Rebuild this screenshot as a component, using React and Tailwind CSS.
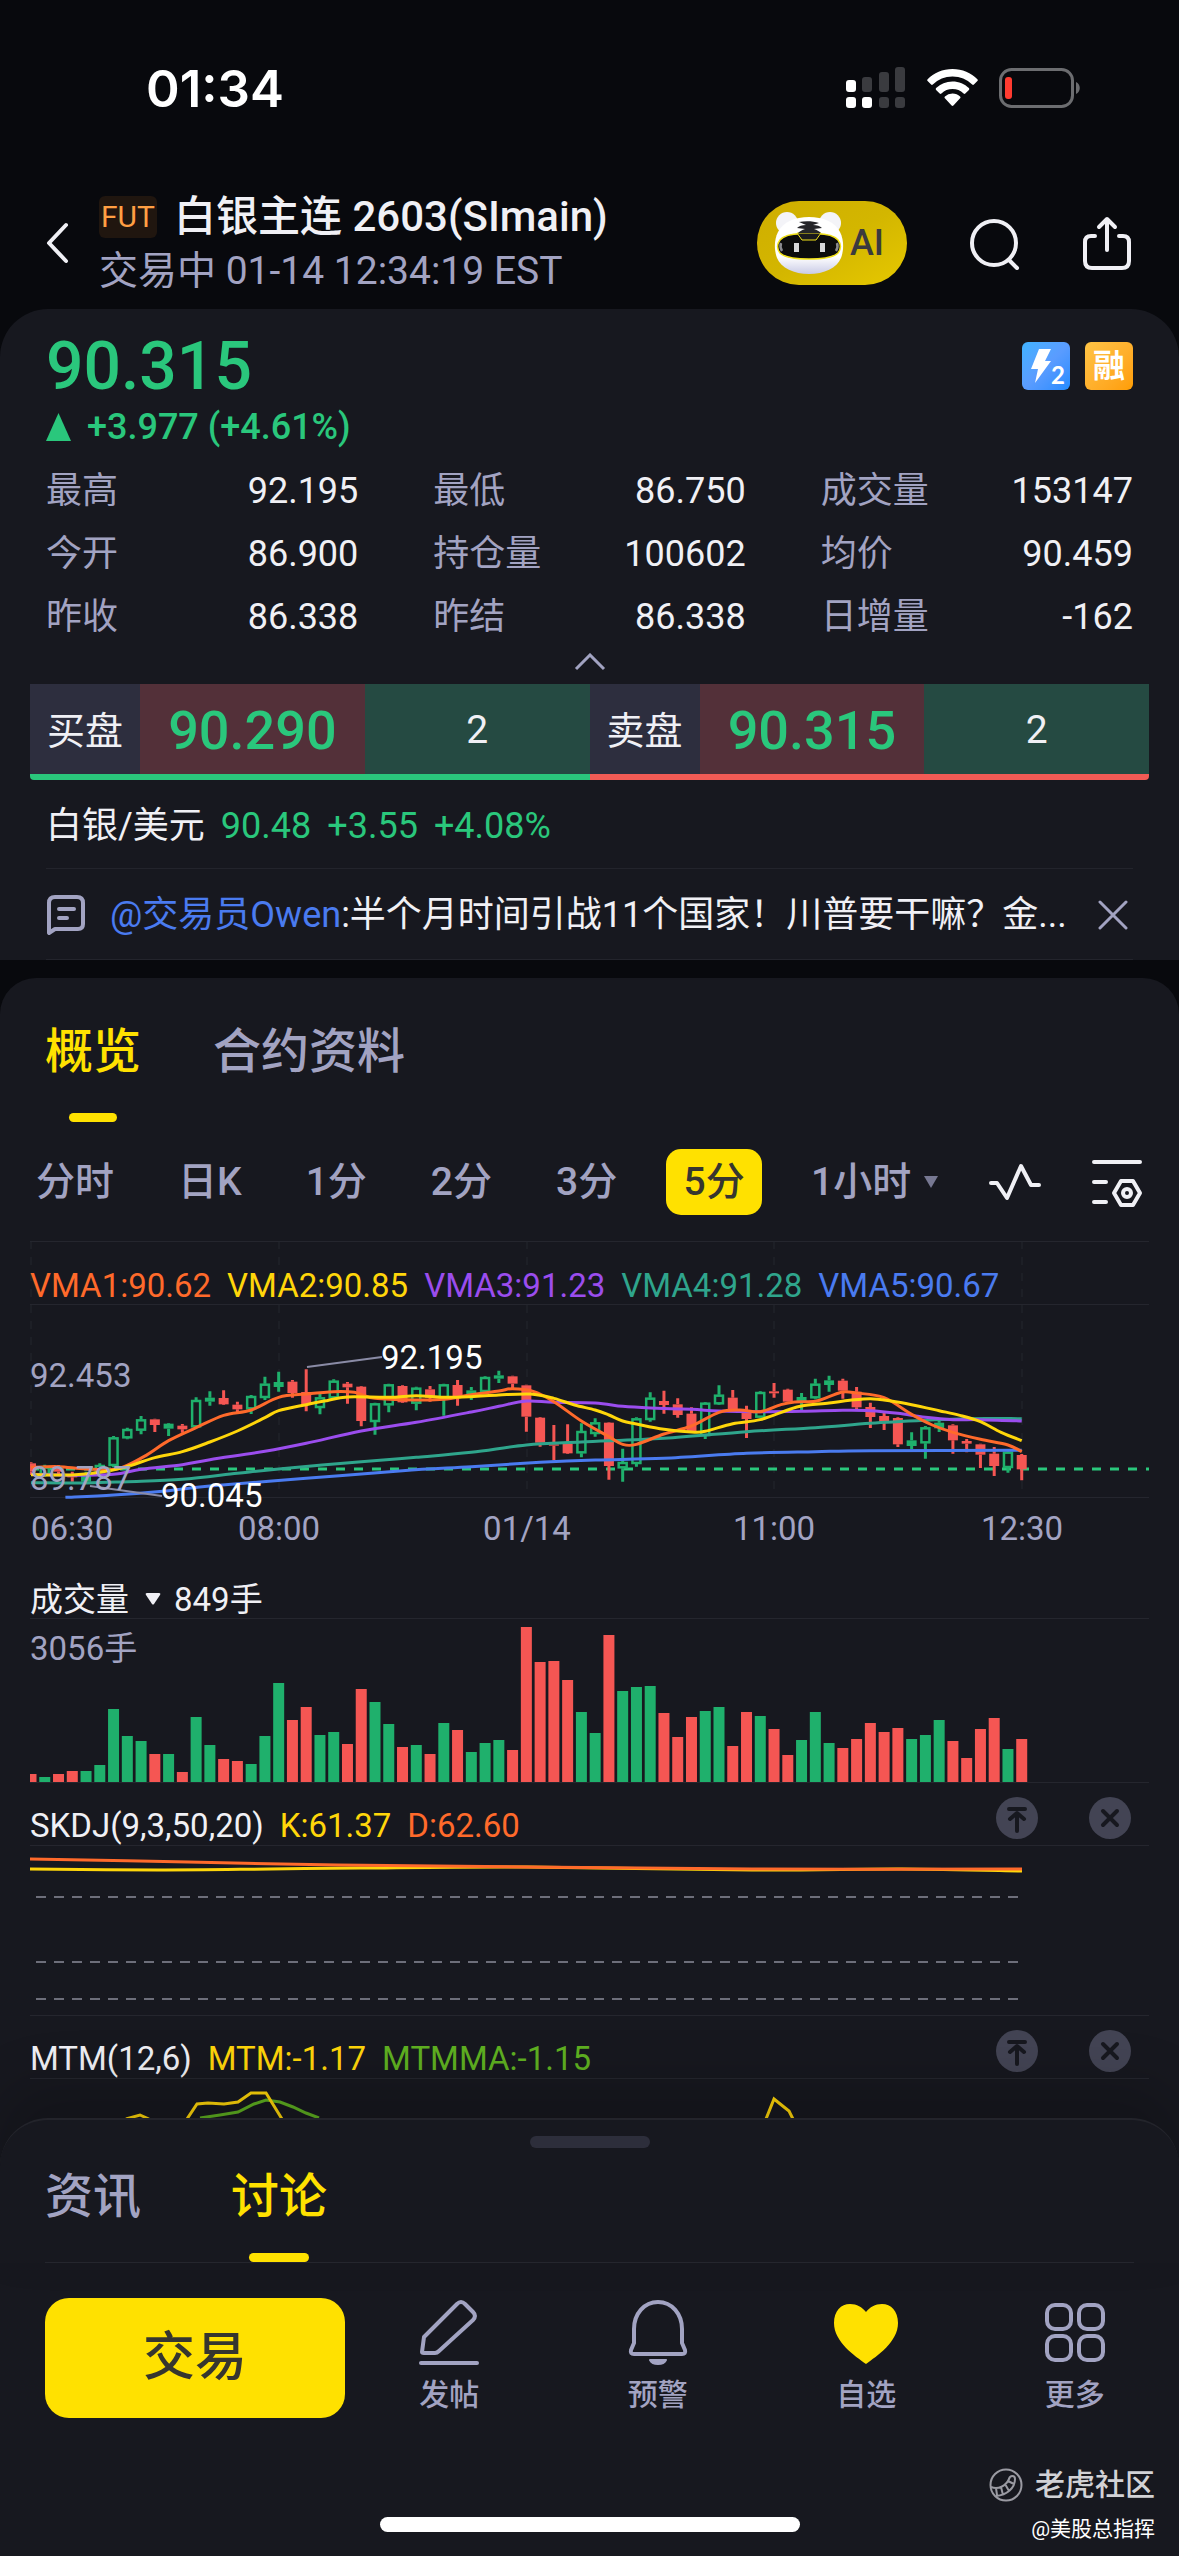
import React from "react";

const STEP = 13.76;

// [up, high, bodyTop, bodyBottom, low] in thirds of a pixel
const CANDLES = [
  [0, 697, 700, 725, 735], [1, 704, 710, 735, 740], [0, 705, 710, 725, 735], [0, 725, 735, 742, 755],
  [1, 725, 738, 755, 762], [1, 700, 705, 725, 730], [1, 618, 622, 708, 712], [1, 593, 597, 625, 628],
  [1, 558, 568, 602, 613], [0, 566, 568, 585, 606], [1, 579, 581, 596, 618], [0, 582, 587, 598, 608],
  [1, 502, 510, 592, 594], [1, 484, 503, 515, 527], [0, 481, 504, 523, 525], [0, 515, 524, 538, 548],
  [1, 495, 498, 538, 552], [1, 440, 461, 504, 510], [1, 425, 456, 471, 485], [0, 450, 455, 489, 503],
  [0, 418, 486, 525, 544], [1, 487, 502, 534, 553], [1, 448, 452, 505, 508], [0, 456, 461, 472, 521],
  [0, 468, 470, 573, 589], [1, 518, 520, 576, 614], [1, 461, 463, 526, 547], [0, 466, 468, 517, 519],
  [1, 470, 473, 521, 541], [0, 468, 478, 503, 515], [1, 461, 463, 506, 557], [0, 450, 465, 500, 527],
  [1, 471, 481, 492, 510], [1, 439, 441, 486, 490], [1, 422, 436, 446, 459], [0, 437, 439, 461, 480],
  [0, 464, 466, 560, 605], [0, 561, 563, 638, 650], [0, 585, 643, 647, 691], [0, 583, 640, 670, 672],
  [1, 580, 603, 670, 682], [1, 565, 577, 612, 620], [0, 577, 578, 708, 749], [1, 656, 696, 715, 755],
  [1, 562, 565, 702, 710], [1, 487, 503, 570, 575], [0, 482, 513, 525, 551], [0, 505, 523, 555, 563],
  [0, 532, 551, 605, 607], [1, 516, 518, 618, 627], [1, 466, 494, 523, 525], [0, 480, 503, 537, 539],
  [0, 527, 548, 567, 624], [1, 484, 486, 563, 565], [0, 459, 484, 490, 503], [0, 476, 479, 515, 517],
  [1, 489, 501, 517, 540], [1, 446, 461, 505, 508], [1, 437, 451, 465, 485], [0, 446, 452, 482, 506],
  [0, 471, 485, 532, 537], [0, 518, 531, 561, 594], [0, 547, 558, 577, 600], [0, 562, 564, 643, 651],
  [1, 607, 631, 648, 657], [1, 588, 592, 640, 686], [1, 570, 578, 595, 606], [0, 583, 586, 631, 671],
  [0, 627, 633, 641, 667], [0, 641, 643, 674, 714], [0, 651, 671, 708, 738], [1, 663, 665, 714, 728],
  [0, 672, 675, 718, 751],
];

// bar heights, one per candle
const VOLUMES = [
  8, 5, 8, 11, 11, 17, 73, 46, 41, 28, 28, 10, 65, 37, 23, 21, 18, 46, 99, 62, 75, 47, 50, 38, 93,
  80, 58, 35, 37, 28, 59, 52, 30, 39, 42, 32, 155, 120, 121, 102, 70, 49, 147, 91, 95, 96, 69, 45,
  65, 71, 75, 36, 70, 66, 53, 27, 42, 70, 39, 34, 43, 59, 50, 54, 43, 47, 62, 41, 24, 53, 64, 33, 43,
];

const AVERAGES = [
  {
    name: "VMA5:90.67", color: "#4a7bf0",
    pts: [[2.5, 802], [6, 795], [10, 782], [13, 768], [20, 745], [27, 722], [32, 710], [37, 697], [41, 690], [46, 685], [52, 670], [57, 665], [61, 662], [72, 661]],
  },
  {
    name: "VMA4:91.28", color: "#2fa58c",
    pts: [[0, 758], [4, 759], [7, 755], [11, 748], [15, 730], [18, 717], [24, 695], [28, 682], [32, 667], [36, 645], [40, 636], [46, 625], [52, 605], [57, 593], [61, 580], [65, 571], [68, 566], [72, 566]],
  },
  {
    name: "VMA3:91.23", color: "#9b4dee",
    pts: [[0, 733], [3, 736], [6, 733], [8, 718], [11, 704], [13, 689], [17, 664], [20, 640], [24, 603], [28, 577], [32, 546], [34, 529], [36, 513], [38, 517], [41, 519], [43, 529], [45, 534], [48, 538], [50, 543], [53, 545], [56, 544], [59, 541], [61, 542], [63, 550], [65, 562], [67, 569], [69, 569], [72, 573]],
  },
  {
    name: "VMA1:90.62", color: "#ff6a2b",
    pts: [[0, 712], [2, 710], [4, 717], [6.3, 716], [8.2, 680], [10, 632], [12, 593], [14, 556], [16, 540], [18, 502], [20, 492], [22, 485], [23.5, 487], [25, 505], [28, 510], [30, 508], [32, 494], [34, 483], [35, 476], [36.5, 484], [38, 515], [40, 573], [42, 620], [43, 643], [44, 643], [46, 612], [48, 588], [50, 547], [51.5, 540], [53, 545], [54.5, 524], [55.5, 516], [57, 514], [58, 500], [59, 486], [60, 489], [62, 503], [64, 553], [65.5, 585], [67, 607], [69, 628], [71, 645], [72, 665]],
  },
  {
    name: "VMA2:90.85", color: "#ffd60a",
    pts: [[0, 734], [3, 735], [5, 727], [6.8, 712], [9, 683], [11, 665], [13, 636], [15, 603], [17, 563], [18, 542], [20, 524], [21.5, 512], [23, 501], [26, 502], [28, 497], [30, 502], [32, 500], [34, 495], [36.3, 492], [38, 505], [39.5, 525], [41, 540], [42, 555], [43, 573], [44, 582], [46, 598], [48, 606], [49, 604], [51, 581], [53, 569], [55, 540], [56, 528], [58, 519], [59.5, 511], [61, 506], [62.5, 513], [64, 524], [66, 542], [67.5, 556], [69, 575], [70.5, 607], [72, 632]],
  },
];

const STATS = [
  ["最高", "92.195"], ["最低", "86.750"], ["成交量", "153147"],
  ["今开", "86.900"], ["持仓量", "100602"], ["均价", "90.459"],
  ["昨收", "86.338"], ["昨结", "86.338"], ["日增量", "-162"],
];

const barX = (i) => 1 + i * STEP;

// smooth line through the points
function curve(pts) {
  let d = `M${pts[0][0]} ${pts[0][1]}`;
  for (let i = 0; i < pts.length - 1; i++) {
    const p0 = pts[i - 1] || pts[i];
    const p1 = pts[i];
    const p2 = pts[i + 1];
    const p3 = pts[i + 2] || p2;
    d += ` C${p1[0] + (p2[0] - p0[0]) / 6} ${p1[1] + (p2[1] - p0[1]) / 6} ${p2[0] - (p3[0] - p1[0]) / 6} ${p2[1] - (p3[1] - p1[1]) / 6} ${p2[0]} ${p2[1]}`;
  }
  return d;
}

function StatusBar() {
  return (
    <div className="flex h-[176px] items-center justify-between pl-[146px] pr-[98px]">
      <span className="font-[Inter,sans-serif] text-[51px] leading-none font-semibold text-white">01:34</span>
      <div className="flex items-center gap-[21px]">
        <svg className="h-[42px] w-[60px]" viewBox="0 0 60 42" fill="#fff">
          <rect x="0" y="13" width="10" height="12" rx="3" />
          <rect x="16" y="10" width="10" height="15" rx="3" fill="#3a3b3f" />
          <rect x="33" y="5" width="10" height="20" rx="3" fill="#3a3b3f" />
          <rect x="49" y="0" width="10" height="25" rx="3" fill="#3a3b3f" />
          <rect x="0" y="30" width="10" height="11" rx="3" />
          <rect x="16" y="30" width="10" height="11" rx="3" />
          <rect x="33" y="30" width="10" height="11" rx="3" fill="#3a3b3f" />
          <rect x="49" y="30" width="10" height="11" rx="3" fill="#3a3b3f" />
        </svg>
        <svg className="h-[38px] w-[51px]" viewBox="0 0 51 38" fill="#fff">
          <path d="M25.500 0C35.300 0 44.200 3.900 50.400 10.200c.5.500.5 1.300 0 1.800l-3.500 3.500c-.5.500-1.200.5-1.700 0A28 28 0 0 0 25.500 7.500 28 28 0 0 0 5.800 15.500c-.5.500-1.200.5-1.700 0L.600 12c-.5-.5-.5-1.300 0-1.800C6.800 3.900 15.700 0 25.500 0z" />
          <path d="M25.500 12.500c6.400 0 12.200 2.500 16.400 6.600.5.500.5 1.300 0 1.800L38.300 24.500c-.5.500-1.200.5-1.700 0a16 16 0 0 0-22.200 0c-.5.500-1.200.5-1.700 0L9.100 20.900c-.5-.5-.5-1.300 0-1.800a23.400 23.400 0 0 1 16.400-6.600z" />
          <path d="M25.500 24.500c2.900 0 5.600 1.100 7.600 3 .5.500.5 1.300 0 1.800l-6.700 7.300c-.5.500-1.300.5-1.800 0l-6.700-7.300c-.5-.5-.5-1.300 0-1.800a11 11 0 0 1 7.600-3z" />
        </svg>
        <svg className="h-[40px] w-[82px]" viewBox="0 0 82 40" fill="none">
          <rect x="1.500" y="1.500" width="72" height="37" rx="11" stroke="#6c6d70" strokeWidth="3" />
          <path d="M77 14c5 2 5 10 0 12z" fill="#6c6d70" />
          <rect x="6" y="9" width="7" height="22" rx="3" fill="#ff3b30" />
        </svg>
      </div>
    </div>
  );
}

function TigerBot() {
  return (
    <svg className="h-[66px] w-[72px]" viewBox="0 0 72 66">
      <defs>
        <linearGradient id="bot" x1="0" y1="0" x2="0" y2="1">
          <stop offset="0.700" stopColor="#fff" />
          <stop offset="1" stopColor="#c9cbe6" />
        </linearGradient>
      </defs>
      <circle cx="14" cy="13" r="11" fill="#f4f4f8" />
      <circle cx="57" cy="13" r="11" fill="#f4f4f8" />
      <path d="M36 7c14 0 26 5 31 15 4 8 4 18 1 26-4 10-17 16-32 16S8 58 4 48C1 40 1 30 5 22 10 12 22 7 36 7z" fill="url(#bot)" />
      <path d="M36 24c12-1 24 0 29 6 3 4 3 9 0 13-5 5-17 6-29 6S12 48 7 43c-3-4-3-9 0-13 5-6 17-7 29-6z" fill="#0c0c0c" stroke="#f2e21a" strokeWidth="1.500" />
      <path d="M24 23h24l-5 7H29z" fill="#1a1a1c" stroke="#f2e21a" strokeWidth="1" />
      <path d="M26 12c6-1 14-1 20 1l-6 2c4 0 7 1 9 3l-8 1c3 1 5 2 7 4H25c2-2 4-3 7-4l-8-1c2-2 5-3 9-3z" fill="#242428" />
      <rect x="21" y="33" width="5" height="9" fill="#d8d8da" />
      <rect x="47" y="33" width="5" height="9" fill="#d8d8da" />
      <path d="M8 33c-1 3-1 5 1 8M64 33c1 3 1 5-1 8" stroke="#8b8b90" strokeWidth="2.500" fill="none" />
    </svg>
  );
}

function Header() {
  return (
    <header className="flex h-[133px] items-center pl-[46px] pr-[48px]">
      <button aria-label="返回" className="mr-[29px]">
        <svg className="h-[42px] w-[24px]" viewBox="0 0 24 42" fill="none" stroke="#f0f0f5" strokeWidth="4" strokeLinecap="round" strokeLinejoin="round">
          <path d="M20 3 3 21l17 18" />
        </svg>
      </button>
      <div className="flex-1 pt-[3px]">
        <h1 className="flex h-[54px] items-center text-[42px] leading-none font-medium whitespace-nowrap text-[#f0f0f5]">
          <span className="mr-[17px] flex h-[42px] w-[58px] items-center justify-center rounded-[6px] bg-[#20160f] text-[30px] font-normal text-[#ff9f43]">
            FUT
          </span>
          白银主连 2603(SImain)
        </h1>
        <p className="flex h-[54px] items-center text-[39px] leading-none whitespace-nowrap text-[#a2a3c2]">
          交易中 01-14 12:34:19 EST
        </p>
      </div>
      <button className="flex h-[84px] w-[150px] items-center rounded-full bg-linear-to-br from-[#cfae00] via-[#d3b600] to-[#e6c800] pl-[16px] text-[36px] leading-none font-medium text-[#3a3a3e]">
        <TigerBot />
        <span className="ml-[5px]">AI</span>
      </button>
      <button aria-label="搜索" className="ml-[60px]">
        <svg className="h-[54px] w-[54px]" viewBox="0 0 54 54" fill="none" stroke="#f0f0f5" strokeWidth="4" strokeLinecap="round">
          <circle cx="27" cy="27" r="22" />
          <path d="m42 44 8 8" />
        </svg>
      </button>
      <button aria-label="分享" className="ml-[62px]">
        <svg className="h-[54px] w-[48px]" viewBox="0 0 48 54" fill="none" stroke="#f0f0f5" strokeWidth="4" strokeLinecap="round" strokeLinejoin="round">
          <path d="M12 20H8q-6 0-6 6v19q0 7 7 7h30q7 0 7-7V26q0-6-6-6h-4" />
          <path d="M24 34V3M16 11l8-8 8 8" />
        </svg>
      </button>
    </header>
  );
}

function Quote({ label, price, side }) {
  return (
    <div className={`flex h-[96px] flex-1 items-stretch border-b-[6px] ${side === "buy" ? "border-[#2ac77c] rounded-bl-[4px]" : "border-[#f25b55] rounded-br-[4px]"}`}>
      <div className="flex w-[110px] items-center justify-center bg-[#2d2e3e] pt-[3px] text-[38px] leading-none text-[#f0f0f5]">{label}</div>
      <div className="flex flex-1 items-center justify-center bg-[#533039] pt-[3px] text-[54px] leading-none font-medium text-[#2ac77c]">{price}</div>
      <div className="flex flex-1 items-center justify-center bg-[#254a42] pt-[3px] text-[39px] leading-none text-[#f0f0f5]">2</div>
    </div>
  );
}

function PricePanel() {
  return (
    <section className="rounded-t-[48px] bg-[#17181f]">
      <div className="px-[46px] pt-[22px]">
        <div className="flex h-[70px] items-center justify-between">
          <span className="pt-[2px] text-[66px] leading-none font-medium text-[#2ac77c]">90.315</span>
          <div className="flex gap-[15px]">
            <div className="flex h-[48px] w-[48px] items-center rounded-[6px] bg-linear-to-br from-[#3fb2ff] via-[#5a9cff] to-[#1f8bff] pl-[8px]">
              <svg className="h-[34px] w-[21px]" viewBox="0 0 21 34" fill="#fff">
                <path d="M9 0h12l-6 12h6L5 34l3-14H1z" />
              </svg>
              <span className="mt-[18px] font-[Lato,sans-serif] text-[24px] leading-none font-bold text-white">2</span>
            </div>
            <div className="flex h-[48px] w-[48px] items-center justify-center rounded-[6px] bg-linear-to-br from-[#ffc445] to-[#ff9d00] text-[32px] leading-none font-bold text-white">
              融
            </div>
          </div>
        </div>
        <div className="flex h-[52px] items-center gap-[16px] text-[36px] leading-none font-medium text-[#2ac77c]">
          <svg className="h-[28px] w-[25px]" viewBox="0 0 25 28" fill="currentColor">
            <path d="M12.500 0 25 28H0z" />
          </svg>
          +3.977 (+4.61%)
        </div>
        <dl className="mt-[6px] grid grid-cols-3 gap-x-[75px]">
          {STATS.map(([label, value]) => (
            <div key={label} className="flex h-[63px] items-center justify-between text-[36px] leading-none">
              <dt className="text-[#a2a3c2]">{label}</dt>
              <dd className="text-[#f0f0f5]">{value}</dd>
            </div>
          ))}
        </dl>
        <button aria-label="收起" className="mx-auto mb-[8px] flex h-[28px] items-center">
          <svg className="h-[18px] w-[32px]" viewBox="0 0 32 18" fill="none" stroke="#a2a3c2" strokeWidth="3">
            <path d="M2 16 16 2l14 14" />
          </svg>
        </button>
      </div>

      <div className="flex px-[30px]">
        <Quote label="买盘" price="90.290" side="buy" />
        <Quote label="卖盘" price="90.315" side="sell" />
      </div>

      <div className="px-[46px]">
        <div className="flex h-[88px] items-center gap-[16px] pt-[3px] text-[36px] leading-none text-[#2ac77c]">
          <span className="text-[#f0f0f5]">白银/美元</span>
          <span>90.48</span>
          <span>+3.55</span>
          <span>+4.08%</span>
        </div>
        <div className="flex h-[92px] items-center border-y border-[#23242c] pt-[2px] text-[36px] leading-none">
          <svg className="h-[40px] w-[40px] shrink-0" viewBox="0 0 40 40" fill="none" stroke="#a2a3c2" strokeWidth="4" strokeLinecap="round" strokeLinejoin="round">
            <path d="M3 38V8q0-6 6-6h22q6 0 6 6v21q0 5-5 5H9z" />
            <path d="M13 14h15M13 23h8" />
          </svg>
          <p className="ml-[24px] min-w-0 flex-1 truncate leading-[50px] text-[#f0f0f5]">
            <a href="#owen" className="text-[#4a7bf0]">@交易员Owen</a>:半个月时间引战11个国家！川普要干嘛？金...
          </p>
          <button aria-label="关闭" className="ml-[16px] mr-[5px]">
            <svg className="h-[30px] w-[30px]" viewBox="0 0 30 30" fill="none" stroke="#a2a3c2" strokeWidth="3" strokeLinecap="round">
              <path d="m2 2 26 26M28 2 2 28" />
            </svg>
          </button>
        </div>
      </div>
    </section>
  );
}

function KLineChart() {
  const legend = ["VMA1:90.62", "VMA2:90.85", "VMA3:91.23", "VMA4:91.28", "VMA5:90.67"];
  return (
    <div className="relative">
      <svg className="h-auto w-full" viewBox="0 11 1119 317">
        <g stroke="#25262e" strokeWidth="1">
          <path d="M0 11.500h1119M0 74.500h1119M0 267.500h1119" />
          <path d="M1 11v256M249 11v256M497 11v256M744 11v256M992 11v256" strokeDasharray="8 8" />
        </g>
        <path d="M0 239h1119" stroke="#2ac77c" strokeWidth="3" strokeDasharray="9 9" />
        {CANDLES.map(([up, high, top, bottom, low], i) => {
          const x = barX(i);
          const left = Math.max(x - 5, 0);
          const color = up ? "#1fb06c" : "#f55653";
          // thin rising bodies are drawn solid
          const hollow = up && bottom - top > 17;
          return (
            <g key={i} stroke={color} fill={color}>
              <path d={`M${x} ${high / 3}V${top / 3}M${x} ${bottom / 3}V${low / 3}`} strokeWidth="3" />
              {hollow ? (
                <rect x={x - 4} y={top / 3 + 1} width="8" height={(bottom - top) / 3 - 2} fill="none" strokeWidth="2.500" />
              ) : (
                <rect x={left} y={top / 3} width={x + 5 - left} height={(bottom - top) / 3} stroke="none" />
              )}
            </g>
          );
        })}
        {AVERAGES.map((line) => (
          <path key={line.name} d={curve(line.pts.map(([i, v]) => [barX(i), v / 3]))} fill="none" stroke={line.color} strokeWidth="3" />
        ))}
        <path d="m277 137 75-10M60 256l72 10" stroke="#8a8ba6" strokeWidth="2" />
        <g fontSize="33" fill="#a2a3c2">
          <text x="0" y="157">92.453</text>
          <text x="0" y="260">89.787</text>
          <text x="1" y="310">06:30</text>
          <text x="249" y="310" textAnchor="middle">08:00</text>
          <text x="497" y="310" textAnchor="middle">01/14</text>
          <text x="744" y="310" textAnchor="middle">11:00</text>
          <text x="992" y="310" textAnchor="middle">12:30</text>
        </g>
        <g fontSize="33" fill="#fff">
          <text x="351" y="139">92.195</text>
          <text x="131" y="277">90.045</text>
        </g>
      </svg>
      <div className="absolute top-0 left-0 flex h-[88px] items-center gap-[16px] text-[33px] leading-none">
        {legend.map((name) => (
          <span key={name} style={{ color: AVERAGES.find((a) => a.name === name).color }}>{name}</span>
        ))}
      </div>
    </div>
  );
}

function VolumeChart() {
  return (
    <div className="mt-[20px]">
      <button className="flex h-[41px] w-full items-center border-b border-[#25262e] pt-[2px] text-[33px] leading-none text-[#f0f0f5]">
        成交量
        <svg className="ml-[16px] mr-[13px] h-[12px] w-[16px]" viewBox="0 0 16 12" fill="#f0f0f5">
          <path d="M2 0h12q2 0 1 2l-6 9q-1 1-2 0L1 2q-1-2 1-2z" />
        </svg>
        849手
      </button>
      <svg className="h-auto w-full" viewBox="0 0 1119 164">
        <path d="M0 163.500h1119" stroke="#25262e" />
        <text x="0" y="41" fontSize="33" fill="#a2a3c2">3056手</text>
        {VOLUMES.map((h, i) => {
          const left = Math.max(barX(i) - 5.5, 0);
          return <rect key={i} x={left} y={163 - h} width={barX(i) + 5.5 - left} height={h} fill={CANDLES[i][0] ? "#1fb06c" : "#f55653"} />;
        })}
      </svg>
    </div>
  );
}

function IndicatorHead({ name, children }) {
  return (
    <div className="flex h-[63px] items-center border-b border-[#25262e] pr-[18px] pt-[8px] text-[33px] leading-none text-[#f0f0f5]">
      <div className="flex flex-1 gap-[16px] pt-[14px]">
        <span>{name}</span>
        {children}
      </div>
      <button aria-label={`${name} 置顶`} className="mr-[51px]">
        <svg className="h-[42px] w-[42px]" viewBox="0 0 42 42" fill="none" stroke="#17181f" strokeWidth="4" strokeLinecap="round" strokeLinejoin="round">
          <circle cx="21" cy="21" r="21" fill="#434454" stroke="none" />
          <path d="M13 12h16M21 34V17M14 22l7-6 7 6" />
        </svg>
      </button>
      <button aria-label={`${name} 关闭`}>
        <svg className="h-[42px] w-[42px]" viewBox="0 0 42 42" fill="none" stroke="#17181f" strokeWidth="4" strokeLinecap="round">
          <circle cx="21" cy="21" r="21" fill="#434454" stroke="none" />
          <path d="m14 14 14 14M28 14 14 28" />
        </svg>
      </button>
    </div>
  );
}

function Intervals() {
  return (
    <div className="mt-[27px] flex h-[66px] items-center justify-between pl-[36px] pr-[36px] text-[39px] leading-none font-medium text-[#a2a3c2]">
      <div className="flex gap-[64px]">
        <button>分时</button>
        <button>日K</button>
        <button>1分</button>
        <button>2分</button>
        <button>3分</button>
      </div>
      <button className="h-[66px] w-[96px] rounded-[15px] bg-[#ffe100] text-[#36362f]">5分</button>
      <button className="flex items-center gap-[12px]">
        1小时
        <svg className="h-[12px] w-[16px]" viewBox="0 0 16 12" fill="#777892">
          <path d="M1 0h14L8 12z" />
        </svg>
      </button>
      <button aria-label="指标">
        <svg className="h-[42px] w-[54px]" viewBox="0 0 54 42" fill="none" stroke="#f0f0f5" strokeWidth="4" strokeLinecap="round" strokeLinejoin="round">
          <path d="M3 22h6l10 15L33 5l10 19h8" />
        </svg>
      </button>
      <button aria-label="设置">
        <svg className="h-[52px] w-[52px]" viewBox="0 0 52 52" fill="none" stroke="#f0f0f5" strokeWidth="4" strokeLinecap="round" strokeLinejoin="round">
          <path d="M3 6h46M3 26h12M3 46h12" />
          <path d="M30 25h12l7 12-7 12H30l-7-12z" />
          <circle cx="36" cy="37" r="4" />
        </svg>
      </button>
    </div>
  );
}

function ChartPanel() {
  return (
    <section className="mt-[18px] rounded-t-[36px] bg-[#17181f]">
      <nav className="flex h-[144px] items-stretch gap-[72px] px-[45px] text-[48px] leading-none font-medium">
        <button className="relative pt-[4px] text-[#ffe100]">
          概览
          <span className="absolute bottom-0 left-1/2 h-[9px] w-[48px] -translate-x-1/2 rounded-full bg-[#ffe100]" />
        </button>
        <button className="pt-[4px] text-[#a2a3c2]">合约资料</button>
      </nav>
      <Intervals />
      <div className="mt-[26px] px-[30px]">
        <KLineChart />
        <VolumeChart />
        <IndicatorHead name="SKDJ(9,3,50,20)">
          <span className="text-[#ffd60a]">K:61.37</span>
          <span className="text-[#ff6a2b]">D:62.60</span>
        </IndicatorHead>
        <svg className="h-auto w-full" viewBox="0 0 1119 170" fill="none" strokeWidth="3">
          <path d={curve([[0, 23], [128, 24], [240, 23], [330, 22], [497, 21], [722, 24], [872, 23], [992, 25]])} stroke="#ffd60a" />
          <path d={curve([[0, 13], [158, 16], [308, 19], [497, 21], [722, 23], [992, 23]])} stroke="#ff6a2b" />
          <path d="M6 51h982M6 116h982M6 153h982" stroke="#6d6e7a" strokeWidth="2" strokeDasharray="10 8" />
          <path d="M0 169.500h1119" stroke="#25262e" strokeWidth="1" />
        </svg>
        <IndicatorHead name="MTM(12,6)">
          <span className="text-[#ffd60a]">MTM:-1.17</span>
          <span className="text-[#5fb021]">MTMMA:-1.15</span>
        </IndicatorHead>
        <svg className="h-auto w-full" viewBox="0 0 1119 39" fill="none" strokeWidth="3">
          <path d="m170 39 20-3 18-3 16-8 12-4 14 2 13 5 13 6 13 5" stroke="#5fb021" />
          <path d="m96 40 14-4 9 4M157 40l10-15 11-1 16 1 14-2 13-9h15l16 26M736 40l8-20 15 12 4 8" stroke="#ffd60a" />
        </svg>
      </div>
    </section>
  );
}

function Action({ label, children }) {
  return (
    <button className="flex h-[120px] flex-1 flex-col items-center text-[30px] leading-none font-medium text-[#a2a3c2]">
      <svg className="h-[70px] w-[70px]" viewBox="0 0 70 70" fill="none" stroke="currentColor" strokeWidth="4" strokeLinecap="round" strokeLinejoin="round">
        {children}
      </svg>
      <span className="mt-[12px]">{label}</span>
    </button>
  );
}

function BottomSheet() {
  return (
    <section className="relative bg-[#17181f]">
      <div className="relative rounded-t-[48px] border-t-2 border-[#23242b] bg-[#17181f] pt-[16px] shadow-[0_-30px_60px_rgba(0,0,0,0.2)]">
        <div className="mx-auto h-[12px] w-[120px] rounded-[6px] bg-[#2d2e3b]" />
        <nav className="mx-[45px] flex h-[115px] items-stretch gap-[90px] border-b border-[#25262e] text-[48px] leading-none font-medium">
          <button className="pb-[16px] text-[#a2a3c2]">资讯</button>
          <button className="relative pb-[16px] text-[#ffe100]">
            讨论
            <span className="absolute bottom-0 left-1/2 h-[9px] w-[60px] -translate-x-1/2 rounded-full bg-[#ffe100]" />
          </button>
        </nav>
      </div>
      <div className="flex pt-[35px] pl-[45px]">
        <button className="h-[120px] w-[300px] rounded-[24px] bg-[#ffe100] text-[52px] leading-none font-medium text-[#36362f]">
          交易
        </button>
        <Action label="发帖">
          <path d="M7 65h56" />
          <path d="M8 54l2-15L43 6q4-4 8 0l8 8q4 4 0 8L25 53q-2 2-4 2H10q-2 0-2-1z" />
        </Action>
        <Action label="预警">
          <path d="M11 31C11 16 21 4 35 4s24 12 24 27v14l3 7q1 4-3 4H11q-4 0-3-4l3-7z" />
          <path d="M27 62q2 4 8 4t8-4z" fill="currentColor" strokeWidth="2" />
        </Action>
        <Action label="自选">
          <path d="M35 66C24 58 3 44 3 25 3 13 10 6 19 6c7 0 12 3 16 8 4-5 9-8 16-8 9 0 16 7 16 19 0 19-21 33-32 41z" fill="#ffe100" stroke="none" />
        </Action>
        <Action label="更多">
          <rect x="7" y="7" width="24" height="24" rx="8" />
          <rect x="39" y="7" width="24" height="24" rx="8" />
          <rect x="7" y="38" width="24" height="24" rx="8" />
          <rect x="39" y="38" width="24" height="24" rx="8" />
        </Action>
      </div>
      <div className="pt-[99px] pb-[24px]">
        <div className="mx-auto h-[15px] w-[420px] rounded-full bg-white" />
      </div>
      <div className="absolute right-[24px] bottom-[14px] flex flex-col items-end text-[#d2d2d6]">
        <div className="flex items-center gap-[12px] text-[30px] leading-none font-medium">
          <svg className="h-[34px] w-[34px]" viewBox="0 0 34 34" fill="none" stroke="#9a9aa2" strokeWidth="2">
            <circle cx="17" cy="17" r="15.500" />
            <path d="M2 19c7 3 15-1 18-8 1-4 6-4 6 0 0 9-8 16-19 17M7 20l1 7M12 19l2 8M16 16l4 7M19 13l6 3" />
          </svg>
          老虎社区
        </div>
        <span className="mt-[14px] text-[21px] leading-[26px] text-white">@美股总指挥</span>
      </div>
    </section>
  );
}

export default function App() {
  return (
    <div className="min-h-screen w-full overflow-hidden bg-[#08090d] font-[Roboto,'Noto_Sans_CJK_SC',sans-serif]">
      <StatusBar />
      <Header />
      <PricePanel />
      <ChartPanel />
      <BottomSheet />
    </div>
  );
}
